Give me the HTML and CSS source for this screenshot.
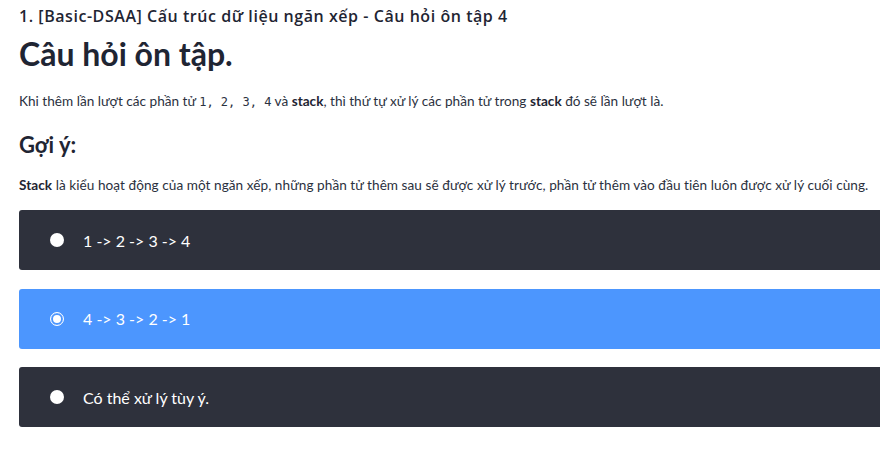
FILE: index.html
```html
<!DOCTYPE html>
<html lang="vi">
<head>
<meta charset="utf-8">
<link rel="stylesheet" href="styles.css">
</head>
<body>
<div class="page">
  <div class="crumb">1. [Basic-DSAA] Cấu trúc dữ liệu ngăn xếp - Câu hỏi ôn tập 4</div>
  <h1 class="title">Câu hỏi ôn tập.</h1>
  <p class="text">Khi thêm lần lượt các phần tử <code class="code">1, 2, 3, 4</code> và <b>stack</b>, thì thứ tự xử lý các phần tử trong <b>stack</b> đó sẽ lần lượt là.</p>
  <h2 class="hint">Gợi ý:</h2>
  <p class="text text-hint"><b>Stack</b> là kiểu hoạt động của một ngăn xếp, những phần tử thêm sau sẽ được xử lý trước, phần tử thêm vào đầu tiên luôn được xử lý cuối cùng.</p>
  <div class="options">
    <div class="option"><span class="dot"></span><span class="label">1 -&gt; 2 -&gt; 3 -&gt; 4</span></div>
    <div class="option selected"><span class="dot"></span><span class="label">4 -&gt; 3 -&gt; 2 -&gt; 1</span></div>
    <div class="option"><span class="dot"></span><span class="label">Có thể xử lý tùy ý.</span></div>
  </div>
</div>
</body>
</html>
```
FILE: styles.css
```css
html, body {
  margin: 0;
  padding: 0;
  background: #fff;
  overflow: hidden;
}
.page {
  padding: 6px 0 0 19px;
  width: 900px;
  color: #1f2533;
  font-family: "Lato", "Noto Sans", sans-serif;
}
.crumb {
  font-family: "Open Sans", "Noto Sans", sans-serif;
  font-size: 16px;
  font-weight: 600;
  letter-spacing: 0.55px;
  line-height: 20px;
  color: #1f2533;
}
.title {
  margin: 9px 0 0 0;
  font-size: 32px;
  line-height: 38px;
  font-weight: 700;
}
.text {
  margin: 19px 0 0 0;
  font-size: 13.6px;
  line-height: 18px;
  color: #2b3140;
}
.text b {
  font-weight: 700;
  color: #1f2533;
}
.code {
  font-family: "DejaVu Sans Mono", monospace;
  font-size: 12px;
  white-space: pre;
}
.hint {
  margin: 20px 0 0 0;
  font-size: 22px;
  line-height: 28px;
  font-weight: 700;
}
.text-hint {
  margin-top: 17px;
  letter-spacing: 0.05px;
}
.options {
  margin-top: 16px;
  display: flex;
  flex-direction: column;
  gap: 18.5px;
}
.option {
  height: 60px;
  background: #2e313c;
  border-radius: 3px;
  display: flex;
  align-items: center;
  padding-left: 31px;
  gap: 19px;
  color: #fff;
  font-family: "Lato", "Noto Sans", sans-serif;
  font-size: 16px;
}
.option.selected {
  background: #4c96fe;
}
.dot {
  width: 14px;
  height: 14px;
  border-radius: 50%;
  background: #fff;
  box-sizing: border-box;
  flex: none;
}
.selected .dot {
  background: #4c96fe;
  border: 1.5px solid #fff;
  box-shadow: inset 0 0 0 2px #4c96fe, inset 0 0 0 6px #fff;
}
```
